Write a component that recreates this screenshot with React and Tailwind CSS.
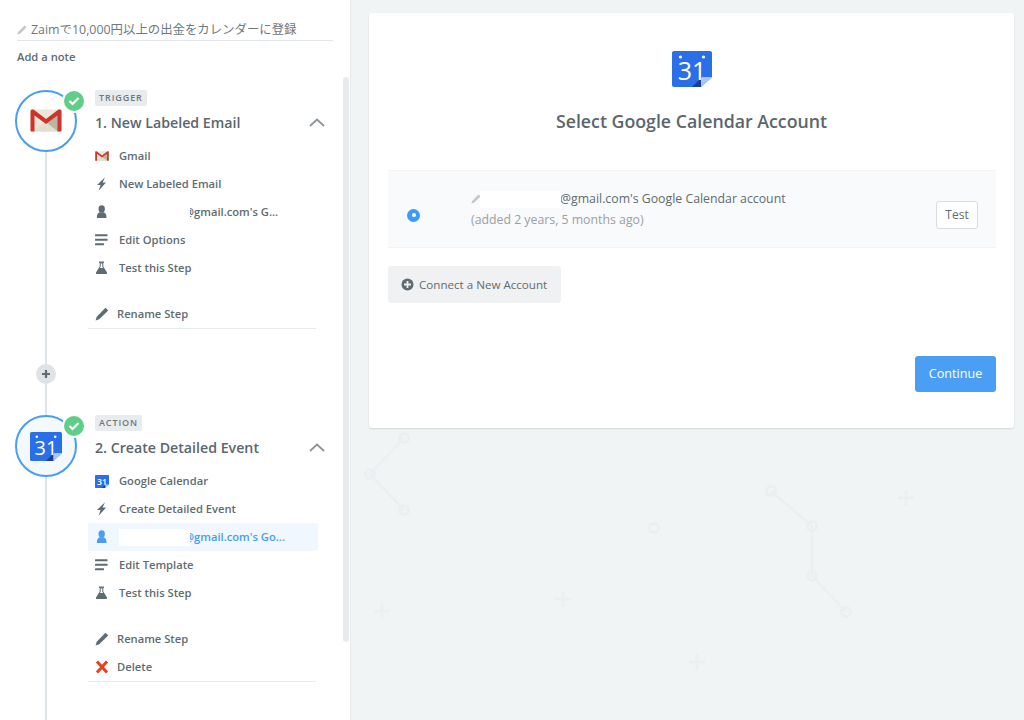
function Gmail({ s = 32 }) {
  return (
    <svg width={s} height={s * 0.72} viewBox="0 0 32 23" preserveAspectRatio="none">
      <rect x="0.5" y="0.5" width="31" height="22" rx="1" fill="#ece7d8" />
      <path d="M4 22.5 L16 12.5 L28 22.5 Z" fill="#e2ddcc" />
      <path d="M16 13 L28 4 L28 22.5 Z" fill="#b9b6a7" />
      <path d="M0.5 2 Q0.5 0.5 2 0.5 L3.5 0.5 L16 10 L28.5 0.5 L30 0.5 Q31.5 0.5 31.5 2 L31.5 21.5 Q31.5 22.5 30.5 22.5 L27.5 22.5 L27.5 6.5 L16 15 L4.5 6.5 L4.5 22.5 L1.5 22.5 Q0.5 22.5 0.5 21.5 Z" fill="#cc3528" />
    </svg>
  );
}

function Calendar({ w = 32, h = 29, dots = true }) {
  return (
    <svg width={w} height={h} viewBox="0 0 40 36" preserveAspectRatio="none">
      <path d="M2 0 H38 Q40 0 40 2 V26 L29 36 H2 Q0 36 0 34 V2 Q0 0 2 0 Z" fill="#2a6ee8" />
      <path d="M40 26 L29 36 V28 Q29 26 31 26 Z" fill="#a9c4f5" />
      <path d="M29 27 V36 H20 Z" fill="#1c3f92" />
      {dots && <circle cx="8.5" cy="6" r="1.6" fill="#ffffff" />}
      {dots && <circle cx="31.5" cy="6" r="1.6" fill="#ffffff" />}
      <text x="20" y="29" textAnchor="middle" fontSize="25" fill="#ffffff" fontFamily="'Open Sans', sans-serif">31</text>
    </svg>
  );
}

function Check() {
  return (
    <div className="absolute left-[47px] top-[-1px] w-[20px] h-[20px] rounded-full bg-[#5fce86] border-2 border-white box-content -m-[2px] flex items-center justify-center">
      <svg width="12" height="10" viewBox="0 0 12 10" fill="none">
        <path d="M1.5 5 L4.5 8 L10.5 2" stroke="#ffffff" strokeWidth="2.2" />
      </svg>
    </div>
  );
}

function Bolt({ c }) {
  return (
    <svg width="14" height="14" viewBox="0 0 14 14">
      <path d="M10 0.2 L2 8 H5.6 L3.6 13.8 L11 5.6 H7.6 Z" fill={c} />
    </svg>
  );
}

function UserIcon({ c }) {
  return (
    <svg width="14" height="14" viewBox="0 0 14 14">
      <ellipse cx="6.7" cy="3.9" rx="3.2" ry="3.6" fill={c} />
      <path d="M1.9 13 Q1.7 8.3 4.7 7.2 H8.7 Q11.7 8.3 11.5 13 Z" fill={c} />
    </svg>
  );
}

function Lines({ c }) {
  return (
    <svg width="14" height="14" viewBox="0 0 14 14">
      <rect x="0" y="1.2" width="12.5" height="2" rx="0.5" fill={c} />
      <rect x="0" y="5.7" width="12.5" height="2" rx="0.5" fill={c} />
      <rect x="0" y="10.2" width="9" height="2" rx="0.5" fill={c} />
    </svg>
  );
}

function Flask({ c }) {
  return (
    <svg width="14" height="14" viewBox="0 0 14 14">
      <rect x="4" y="0.5" width="5" height="1.4" fill={c} />
      <path d="M4.7 2 H8.3 V5.5 L12 11.5 Q12.5 13 11 13 H2 Q0.5 13 1 11.5 L4.7 5.5 Z M5.7 2.4 V5.8 L4.9 7 H8.1 L7.3 5.8 V2.4 Z" fill={c} fillRule="evenodd" />
    </svg>
  );
}

function Pencil({ c = "#5f6b72", s = 14 }) {
  return (
    <svg width={s} height={s} viewBox="0 0 14 14">
      <path d="M10.5 0.8 L13.2 3.4 L4.2 12.2 L0.6 13.4 L1.7 9.7 Z" fill={c} />
    </svg>
  );
}

function Cross() {
  return (
    <svg width="14" height="14" viewBox="0 0 14 14">
      <path d="M2 1.5 L12 12.5 M12 1.5 L2 12.5" stroke="#e8411d" strokeWidth="3" />
    </svg>
  );
}

function Masked({ text }) {
  return (
    <span className="flex items-center">
      <span className="relative z-10 w-[71px] h-[17px] bg-white" />
      <span className="-ml-[6px]">{text}</span>
    </span>
  );
}

function Row({ icon, active, gap = "w-[24px]", children }) {
  return (
    <div className={`h-[28px] pl-[7px] flex items-center rounded-[2px] ${active ? "bg-[#f0f7ff] text-[#499df3]" : ""}`}>
      <span className={`${gap} shrink-0 flex items-center`}>{icon}</span>
      <span className="whitespace-nowrap">{children}</span>
    </div>
  );
}

function Step({ logo, tint, label, title, rows, footer }) {
  return (
    <section className="relative flex">
      <div className="w-[88px] shrink-0 relative">
        <div className={`relative ml-[15px] w-[62px] h-[62px] rounded-full border-2 border-[#499df3] flex items-center justify-center ${tint}`}>
          {logo}
          <Check />
        </div>
      </div>
      <div className="w-[230px] text-[11.2px] font-semibold text-[#5f6b72]">
        <div className="pl-[7px]">
          <span className="block w-fit h-[16px] px-[4px] rounded-[2px] bg-[#e9ecee] text-[9px] leading-[16px] tracking-[0.9px] font-semibold text-[#6d787e]">{label}</span>
          <div className="flex items-center justify-between h-[24px] mt-[5px] mb-[7px] -mr-[7px] text-[14.2px] text-[#5b666d]">
            <span>{title}</span>
            <svg width="16" height="9" viewBox="0 0 16 9" fill="none" className="-mt-[2px]">
              <path d="M1 8 L8 1.5 L15 8" stroke="#8b959b" strokeWidth="1.8" />
            </svg>
          </div>
        </div>
        {rows}
        <div className="h-[18px]" />
        {footer}
        <div className="h-px w-[228px] bg-[#e9ecee]" />
      </div>
    </section>
  );
}

function Decor() {
  const c = "#ecEFf1";
  const node = (x, y, k) => <circle key={k} cx={x} cy={y} r="4.6" fill="none" stroke={c} strokeWidth="3" />;
  const plus = (x, y, k) => <path key={k} d={`M${x - 8} ${y} H${x + 8} M${x} ${y - 8} V${y + 8}`} stroke={c} strokeWidth="3" fill="none" />;
  return (
    <svg className="absolute left-0 top-0" width="673" height="720" viewBox="351 0 673 720">
      <path d="M404 438 L370 474 L404 510 M771 491 L812 526 V576 L846 612" stroke={c} strokeWidth="2.5" fill="none" />
      {[[404, 438], [370, 474], [404, 510], [654, 528], [771, 491], [812, 526], [812, 576], [846, 612]].map(([x, y], i) => node(x, y, i))}
      {[[382, 611], [563, 599], [697, 662], [906, 498]].map(([x, y], i) => plus(x, y, i))}
    </svg>
  );
}

export default function App() {
  const g = "#5f6b72";
  return (
    <div className="w-[1024px] h-[720px] overflow-hidden flex bg-[#f1f4f5] font-['Open_Sans','Noto_Sans_CJK_JP',sans-serif]">
      <aside className="relative w-[351px] h-[720px] shrink-0 bg-white border-r border-[#e6e9eb] overflow-hidden">
        <div className="absolute left-[45px] top-[150px] w-[2px] h-[570px] bg-[#dfe4e8]" />
        <div className="absolute left-[343px] top-[77px] w-[6px] h-[565px] rounded-[3px] bg-[#e8ebee]" />
        <div className="relative pt-[20px]">
          <div className="mx-[17px] w-[316px] h-[21px] flex items-center border-b border-[#e2e6ea] text-[12.4px] text-[#6d787e] whitespace-nowrap">
            <span className="w-[14px] shrink-0"><Pencil c="#c3c7ca" s={10} /></span>
            Zaimで10,000円以上の出金をカレンダーに登録
          </div>
          <div className="ml-[17px] mt-[7px] h-[17px] leading-[17px] text-[11.2px] font-semibold text-[#5f6b72]">Add a note</div>
          <div className="h-[25px]" />
          <Step
            logo={<Gmail />}
            tint="bg-white"
            label="TRIGGER"
            title="1. New Labeled Email"
            rows={
              <>
                <Row icon={<Gmail s={14} />}>Gmail</Row>
                <Row icon={<Bolt c={g} />}>New Labeled Email</Row>
                <Row icon={<UserIcon c={g} />}><Masked text="@gmail.com's G..." /></Row>
                <Row icon={<Lines c={g} />}>Edit Options</Row>
                <Row icon={<Flask c={g} />}>Test this Step</Row>
              </>
            }
            footer={<Row gap="w-[22px]" icon={<Pencil c={g} />}>Rename Step</Row>}
          />
          <div className="h-[86px] pt-[35px] pl-[36px]">
            <div className="relative w-[20px] h-[20px] rounded-full bg-[#dfe3e6] flex items-center justify-center">
              <svg width="10" height="10" viewBox="0 0 10 10"><path d="M5 1 V9 M1 5 H9" stroke="#5f6b72" strokeWidth="2.2" /></svg>
            </div>
          </div>
          <Step
            logo={<Calendar />}
            tint="bg-[#f4f9ff]"
            label="ACTION"
            title="2. Create Detailed Event"
            rows={
              <>
                <Row icon={<Calendar w={14} h={13} dots={false} />}>Google Calendar</Row>
                <Row icon={<Bolt c={g} />}>Create Detailed Event</Row>
                <Row active icon={<UserIcon c="#499df3" />}><Masked text="@gmail.com's Go..." /></Row>
                <Row icon={<Lines c={g} />}>Edit Template</Row>
                <Row icon={<Flask c={g} />}>Test this Step</Row>
              </>
            }
            footer={
              <>
                <Row gap="w-[22px]" icon={<Pencil c={g} />}>Rename Step</Row>
                <Row gap="w-[22px]" icon={<Cross />}>Delete</Row>
              </>
            }
          />
        </div>
      </aside>
      <main className="relative flex-1 h-[720px] overflow-hidden">
        <Decor />
        <div className="relative mt-[13px] ml-[18px] w-[645px] h-[415px] bg-white rounded-[3px] shadow-[0_1px_2px_rgba(0,0,0,0.12)] px-[19px] pt-[38px] text-[#5f6b72]">
          <div className="flex justify-center"><Calendar w={40} h={36} /></div>
          <h1 className="mt-[21px] h-[26px] leading-[26px] text-center text-[17.75px] font-semibold text-[#5b666d]">Select Google Calendar Account</h1>
          <div className="mt-[36px] h-[78px] w-[608px] flex items-center bg-[#f9fafb] border-y border-[#f1f3f4] pl-[19px] pr-[18px]">
            <span className="w-[13px] h-[13px] mt-[12px] rounded-full bg-[#3d9bf7] flex items-center justify-center shrink-0">
              <span className="w-[4px] h-[4px] rounded-full bg-white" />
            </span>
            <div className="ml-[51px] flex-1 text-[12.3px]">
              <div className="h-[21px] flex items-center">
                <span className="w-[9px] shrink-0"><Pencil c="#c3c7ca" s={10} /></span>
                <span className="w-[81px] h-[17px] bg-white shrink-0 relative z-10" />
                <span className="-ml-[1px]">@gmail.com's Google Calendar account</span>
              </div>
              <div className="h-[20px] leading-[20px] text-[#999fa3]">(added 2 years, 5 months ago)</div>
            </div>
            <button className="w-[42px] h-[28px] mt-[12px] bg-white border border-[#d8dcdf] rounded-[3px] text-[12px]">Test</button>
          </div>
          <button className="mt-[18px] h-[37px] w-[173px] flex items-center bg-[#f0f1f2] rounded-[3px] pl-[13px] text-[11.6px] whitespace-nowrap">
            <svg width="13" height="13" viewBox="0 0 13 13" className="mr-[5px]">
              <circle cx="6.5" cy="6.5" r="6" fill="#5f6b72" />
              <path d="M6.5 3 V10 M3 6.5 H10" stroke="#f0f1f2" strokeWidth="1.8" />
            </svg>
            Connect a New Account
          </button>
          <div className="mt-[53px] flex justify-end w-[608px]">
            <button className="w-[81px] h-[36px] bg-[#4a9ff5] rounded-[3px] text-white text-[12.6px]">Continue</button>
          </div>
        </div>
      </main>
    </div>
  );
}
